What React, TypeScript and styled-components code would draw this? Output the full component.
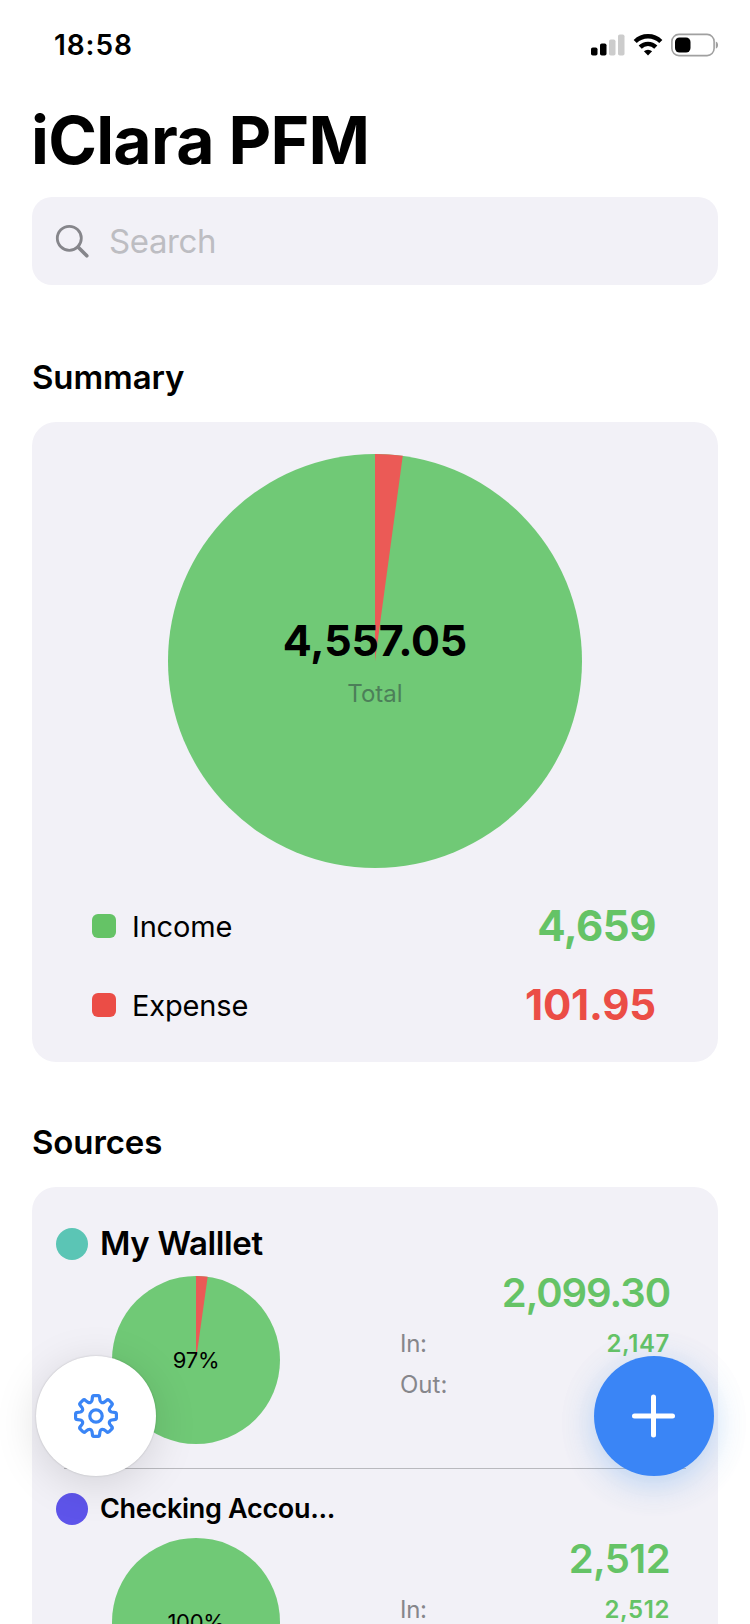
import React from 'react';
import styled, { createGlobalStyle } from 'styled-components';

const GlobalStyle = createGlobalStyle`
  * { box-sizing: border-box; }
  html, body { margin: 0; background: #fff; }
  body { font-family: Inter, "Liberation Sans", sans-serif; color: #000; }
`;

const Screen = styled.main`
  position: relative;
  width: 750px;
  height: 1624px;
  overflow: hidden;
  padding: 0 32px;
`;

const Text = styled.span<{ $size: number; $weight?: number; $spacing?: number; $color?: string }>`
  font-size: ${p => p.$size}px;
  font-weight: ${p => p.$weight ?? 400};
  letter-spacing: ${p => p.$spacing ?? 0}px;
  color: ${p => p.$color ?? '#000'};
  white-space: nowrap;
`;

const StatusBar = styled.header`
  display: flex;
  align-items: center;
  justify-content: space-between;
  height: 90px;
  padding: 0 0 0 22px;
`;

const StatusIcons = styled.svg`
  display: block;
  flex: none;
`;

const Title = styled.h1`
  margin: 10px 0 0 -1px;
  line-height: 80px;
  font-size: 66px;
  font-weight: 700;
  letter-spacing: -0.75px;
`;

const SearchBox = styled.div`
  display: flex;
  align-items: center;
  gap: 20px;
  height: 88px;
  margin-top: 17px;
  padding-left: 23px;
  border-radius: 20px;
  background: #f2f1f7;
`;

const SectionTitle = styled.h2<{ $top: number }>`
  margin: ${p => p.$top}px 0 25px;
  line-height: 40px;
  font-size: 33px;
  font-weight: 600;
  letter-spacing: -0.1px;
`;

const Card = styled.section<{ $height: number; $top: number }>`
  height: ${p => p.$height}px;
  padding-top: ${p => p.$top}px;
  border-radius: 24px;
  background: #f2f1f7;
`;

const PieFrame = styled.div<{ $size: number }>`
  position: relative;
  width: ${p => p.$size}px;
  height: ${p => p.$size}px;
  margin: 0 auto;
  svg { display: block; }
`;

const PieLabel = styled.div<{ $shift: number }>`
  position: absolute;
  inset: 0;
  display: flex;
  flex-direction: column;
  align-items: center;
  justify-content: center;
  padding-top: ${p => p.$shift}px;
`;

const TotalValue = styled(Text)`line-height: 60px;`;
const TotalCaption = styled(Text)`line-height: 48px;`;

const Legend = styled.div`
  display: flex;
  flex-direction: column;
  gap: 1px;
  margin-top: 19px;
  padding: 0 62px 0 60px;
`;

const LegendRow = styled.div`
  display: flex;
  align-items: center;
  height: 78px;
`;

const Swatch = styled.i<{ $color: string }>`
  width: 24px;
  height: 24px;
  margin-right: 16px;
  border-radius: 6px;
  background: ${p => p.$color};
`;

const LegendValue = styled(Text)`
  margin-left: auto;
  padding-bottom: 2px;
`;

const Source = styled.article`
  display: flex;
  align-items: center;
  padding: 0 48px 0 24px;
`;

const SourceMain = styled.div`width: 344px;`;

const SourceHead = styled.div<{ $height: number }>`
  display: flex;
  align-items: center;
  gap: 12px;
  height: ${p => p.$height}px;
  margin-bottom: 12px;
`;

const Dot = styled.i<{ $color: string }>`
  width: 32px;
  height: 32px;
  border-radius: 50%;
  background: ${p => p.$color};
`;

const SourceName = styled(Text)`padding-bottom: 1px;`;

const SourcePie = styled.div`
  width: 168px;
  margin-left: 56px;
`;

const Figures = styled.div<{ $offset: number }>`
  flex: 1;
  display: flex;
  flex-direction: column;
  padding-top: ${p => p.$offset}px;
`;

const Balance = styled(Text)`
  line-height: 60px;
  text-align: right;
`;

const FigureRow = styled.div`
  display: flex;
  justify-content: space-between;
  line-height: 41px;
`;

const Divider = styled.hr`
  height: 1px;
  margin: 24px 32px 23px;
  border: 0;
  background: #b9b9be;
`;

const RoundButton = styled.button<{ $primary?: boolean }>`
  position: absolute;
  top: 1356px;
  ${p => (p.$primary ? 'right: 36px;' : 'left: 36px;')}
  display: flex;
  align-items: center;
  justify-content: center;
  width: 120px;
  height: 120px;
  padding: 0;
  border: 0;
  border-radius: 50%;
  background: ${p => (p.$primary ? '#3a85f6' : '#fff')};
  box-shadow: ${p =>
    p.$primary
      ? '0 8px 32px rgba(58, 150, 246, 0.3), 0 6px 70px rgba(0, 0, 0, 0.03)'
      : '0 0 2px rgba(0, 0, 0, 0.2), 0 8px 44px rgba(0, 0, 0, 0.13)'};
`;

const GREEN = '#65c366';
const RED = '#eb4d46';
const GREY = '#86868b';

function Pie({ size, share }: { size: number; share: number }) {
  const r = size / 2;
  const a = share * 2 * Math.PI;
  return (
    <svg width={size} height={size}>
      <circle cx={r} cy={r} r={r} fill="#70c976" />
      {share > 0 && (
        <path d={`M${r} ${r}V0A${r} ${r} 0 0 1 ${r + r * Math.sin(a)} ${r - r * Math.cos(a)}Z`} fill="#eb5a56" />
      )}
    </svg>
  );
}

function gearPath() {
  const pt = (r: number, deg: number) => {
    const t = ((deg - 90) * Math.PI) / 180;
    return `${(22 + r * Math.cos(t)).toFixed(2)} ${(22 + r * Math.sin(t)).toFixed(2)}`;
  };
  let d = '';
  for (let k = 0; k < 8; k++) {
    const c = k * 45;
    d += `${k ? 'L' : 'M'}${pt(16, c - 14.5)}L${pt(18.8, c - 11)}Q${pt(20.7, c - 10)} ${pt(20.5, c - 5)}`;
    d += `L${pt(20.5, c + 5)}Q${pt(20.7, c + 10)} ${pt(18.8, c + 11)}L${pt(16, c + 14.5)}Q${pt(13.4, c + 22.5)} ${pt(16, c + 30.5)}`;
  }
  return d + 'Z';
}

interface SourceProps {
  name: string;
  nameSize: number;
  nameSpacing: number;
  headHeight: number;
  color: string;
  share: number;
  percent: string;
  balance: string;
  balanceSpacing: number;
  income: string;
  offset: number;
}

function SourceItem(p: SourceProps) {
  return (
    <Source>
      <SourceMain>
        <SourceHead $height={p.headHeight}>
          <Dot $color={p.color} />
          <SourceName $size={p.nameSize} $weight={600} $spacing={p.nameSpacing}>{p.name}</SourceName>
        </SourceHead>
        <SourcePie>
          <PieFrame $size={168}>
            <Pie size={168} share={p.share} />
            <PieLabel $shift={0}>
              <Text $size={22} $spacing={-0.3}>{p.percent}</Text>
            </PieLabel>
          </PieFrame>
        </SourcePie>
      </SourceMain>
      <Figures $offset={p.offset}>
        <Balance $size={40} $weight={600} $spacing={p.balanceSpacing} $color={GREEN}>{p.balance}</Balance>
        <FigureRow>
          <Text $size={24} $spacing={-0.3} $color={GREY}>In:</Text>
          <Text $size={24} $weight={600} $spacing={0.6} $color={GREEN}>{p.income}</Text>
        </FigureRow>
        <FigureRow>
          <Text $size={24} $color={GREY}>Out:</Text>
        </FigureRow>
      </Figures>
    </Source>
  );
}

export default function App() {
  return (
    <>
      <GlobalStyle />
      <Screen>
        <StatusBar>
          <Text $size={28} $weight={600} $spacing={0.9}>18:58</Text>
          <StatusIcons width="130" height="24" viewBox="0 0 130 24">
            <rect x="3" y="14.5" width="6.5" height="8" rx="1.8" />
            <rect x="12" y="10.5" width="6.5" height="12" rx="1.8" />
            <rect x="21" y="6.5" width="6.5" height="16" rx="1.8" fill="#ccc" />
            <rect x="30" y="1.5" width="6.5" height="21" rx="1.8" fill="#ccc" />
            <g fill="none" stroke="#000" strokeWidth="4.4">
              <path d="M47.2 8.5a18.2 18.2 0 0 1 25.6 0" />
              <path d="M52.2 14.1a11 11 0 0 1 15.6 0" />
            </g>
            <path d="M60 22.5l-4.1-4.2a6 6 0 0 1 8.2 0z" />
            <rect x="83.9" y="1.4" width="42.2" height="21.2" rx="7" fill="none" stroke="#a0a0a0" strokeWidth="1.6" />
            <rect x="87" y="4.5" width="15.5" height="15" rx="4.5" />
            <path d="M127.8 8.5c3 1 3 6 0 7z" fill="#a0a0a0" />
          </StatusIcons>
        </StatusBar>
        <Title>iClara PFM</Title>
        <SearchBox>
          <svg width="34" height="34" fill="none" stroke="#86868b" strokeWidth="2.8" strokeLinecap="round">
            <circle cx="14.3" cy="14.3" r="12" />
            <path d="M23 23l8.8 8.8" strokeWidth="3.6" />
          </svg>
          <Text $size={33} $spacing={-0.4} $color="#bdbdc2">Search</Text>
        </SearchBox>

        <SectionTitle $top={72}>Summary</SectionTitle>
        <Card $height={640} $top={32}>
          <PieFrame $size={414}>
            <Pie size={414} share={101.95 / 4760.95} />
            <PieLabel $shift={6}>
              <TotalValue $size={43} $weight={700} $spacing={-0.2}>4,557.05</TotalValue>
              <TotalCaption $size={24} $color="#4c7f59">Total</TotalCaption>
            </PieLabel>
          </PieFrame>
          <Legend>
            <LegendRow>
              <Swatch $color={GREEN} />
              <Text $size={29} $spacing={-0.15}>Income</Text>
              <LegendValue $size={42} $weight={700} $spacing={-0.5} $color={GREEN}>4,659</LegendValue>
            </LegendRow>
            <LegendRow>
              <Swatch $color={RED} />
              <Text $size={29} $spacing={-0.15}>Expense</Text>
              <LegendValue $size={42} $weight={700} $spacing={-0.2} $color={RED}>101.95</LegendValue>
            </LegendRow>
          </Legend>
        </Card>

        <SectionTitle $top={60}>Sources</SectionTitle>
        <Card $height={640} $top={36}>
          <SourceItem
            name="My Walllet" nameSize={33} nameSpacing={-0.35} headHeight={41} color="#5bc5b5"
            share={0.0222} percent="97%" balance="2,099.30" balanceSpacing={-1.05} income="2,147" offset={0}
          />
          <Divider />
          <SourceItem
            name="Checking Accou..." nameSize={27} nameSpacing={-0.3} headHeight={34} color="#5e54ea"
            share={0} percent="100%" balance="2,512" balanceSpacing={-0.6} income="2,512" offset={2}
          />
        </Card>

        <RoundButton aria-label="Settings">
          <svg width="44" height="44" fill="none" stroke="#3a85f6" strokeWidth="3.2" strokeLinejoin="round">
            <path d={gearPath()} />
            <circle cx="22" cy="22" r="6.2" />
          </svg>
        </RoundButton>
        <RoundButton $primary aria-label="Add">
          <svg width="44" height="44" stroke="#fff" strokeWidth="5" strokeLinecap="round">
            <path d="M21.5 3v38M2.5 22h38" />
          </svg>
        </RoundButton>
      </Screen>
    </>
  );
}
